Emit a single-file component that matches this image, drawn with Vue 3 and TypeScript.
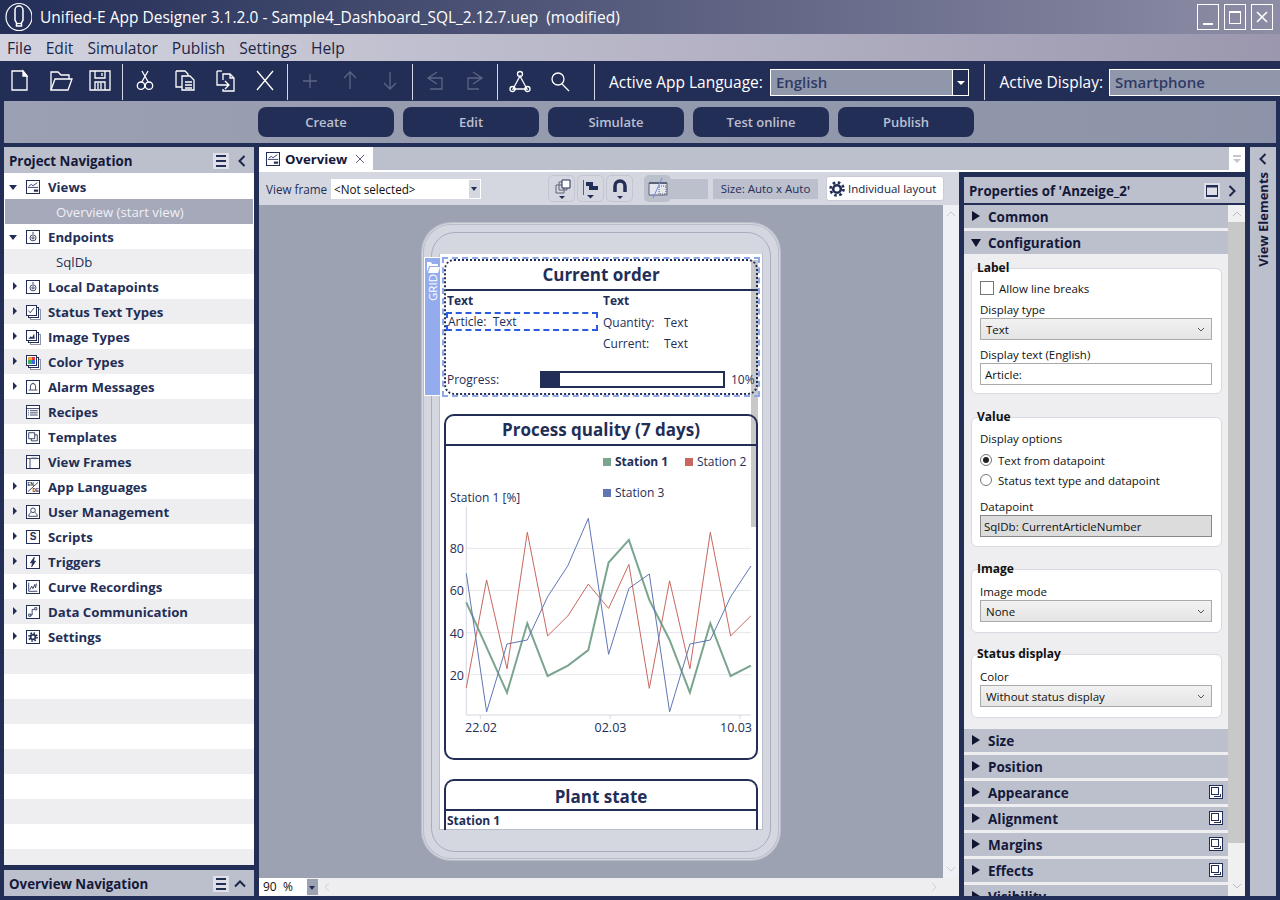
<script setup lang="ts">
const menus = ["File", "Edit", "Simulator", "Publish", "Settings", "Help"]
const actions = ["Create", "Edit", "Simulate", "Test online", "Publish"]

// toolbar icons, drawn on a 28x28 box
const toolIcons: Record<string, string> = {
  new: '<path d="M6 3h11l4 5v14H6z"/><path d="M17 3v5h4z" fill="currentColor"/>',
  open: '<path d="M5 22V4h7l3 3h8v4"/><path d="M5 22l4-11h17l-4 11z"/>',
  save: '<path d="M4 3h20v19H4z"/><path d="M9 3v7h10V3M9 22v-8h10v8M12 15v6M15 15v6M16 5v3"/>',
  cut: '<path d="M10.500 14.500L17 3M17.500 14.500L11 3"/><circle cx="10" cy="17.700" r="3.700"/><circle cx="18" cy="17.700" r="3.700"/>',
  copy: '<path d="M5 3h9l3 3v2M5 3v16h6"/><path d="M11 8h8l4 4v10H11z"/><path d="M14 14h7M14 17h7M14 20h7" />',
  paste: '<path d="M12 12V6h7l4 4v13H12v-2"/><path d="M19 6v4h4"/><path d="M6 3v14h12M14 13l4 4-4 4"/><path d="M6 3h5"/>',
  close: '<path d="M6 3l16 19M22 3L6 22"/>',
  add: '<path d="M14 6v14M7 13h14"/>',
  up: '<path d="M14 4v17M8 10l6-6 6 6"/>',
  down: '<path d="M14 4v17M8 15l6 6 6-6"/>',
  undo: '<path d="M16 4l-9 6 9 6M7 10h14v11H9"/>',
  redo: '<path d="M12 4l9 6-9 6M21 10H7v11h11"/>',
  network: '<path d="M14 8L7 21h14z"/><circle cx="14" cy="6" r="2.500"/><circle cx="6.500" cy="21" r="2.500"/><circle cx="21.500" cy="21" r="2.500"/>',
  search: '<circle cx="12" cy="11" r="6"/><path d="M16 16l7 7"/>',
}

const toolGroups = [
  [{ name: "new" }, { name: "open" }, { name: "save" }],
  [{ name: "cut" }, { name: "copy" }, { name: "paste" }, { name: "close" }],
  [{ name: "add", off: true }, { name: "up", off: true }, { name: "down", off: true }],
  [{ name: "undo", off: true }, { name: "redo", off: true }],
  [{ name: "network" }, { name: "search" }],
]

// project tree icons, drawn on a 14x14 box
const treeIcons: Record<string, string> = {
  views: '<path d="M2 6l3-2 2 1.500L12 2M1 7.500h12"/><path d="M8 10h5v2.500H8z" fill="currentColor" stroke="none"/>',
  point: '<path d="M7 1v2.500"/><circle cx="7" cy="8" r="3.500"/><circle cx="7" cy="8" r="1.300"/>',
  status: '<path d="M2 7l3 3.500L11 3" stroke-width="1.300"/>',
  image: '<path d="M2 12l4-4 2 2 3-6 1 8z" fill="currentColor" stroke="none"/>',
  alarm: '<path d="M4 10V6a3 3 0 0 1 6 0v4M2 10.500h10M7 2v1"/>',
  recipes: '<path d="M0 3h14M3.500 5.500h9M3.500 8h9M3.500 10.500h9M1.200 5.500h1M1.200 8h1M1.200 10.500h1"/>',
  templates: '<path d="M2 2h7v7H2zM9 4.500h3v7H5V9"/>',
  frames: '<path d="M0 3h14M3.500 3v11"/><path d="M5 1.500h7" stroke="#9a9fb3"/>',
  lang: '<path d="M1 12.500L13 1.500"/><text x="0.500" y="6" font-size="5.500" font-weight="700" fill="currentColor" stroke="none" font-family="Liberation Sans">EN</text><text x="6.500" y="13" font-size="5.500" font-weight="700" fill="currentColor" stroke="none" font-family="Liberation Sans">DE</text>',
  user: '<circle cx="7" cy="5" r="2.700"/><path d="M2 12c0-3 2-4 3-4.500M12 12c0-3-2-4-3-4.500M2 12h10"/>',
  trigger: '<path d="M8.500 1.500L4 8h2.500L5.500 12.500 10 6H7.500z" fill="currentColor"/>',
  curves: '<path d="M2 2v10h10M3.500 10l2-4 1.500 3 2-5 1 4 1-5"/>',
  comm: '<path d="M4 10.500h2V4h2.500M9 2h2.500v2.500H9zM2 9.500h2.500V12H2z"/>',
  settings: '<circle cx="7" cy="7" r="2.800" stroke-width="2"/><circle cx="7" cy="7" r="4.700" stroke-dasharray="1.800 1.900" stroke-width="1.800"/>',
}

const treeRows = [
  { label: "Views", icon: "views", arrow: "open" },
  { label: "Overview (start view)", child: true, selected: true },
  { label: "Endpoints", icon: "point", arrow: "open" },
  { label: "SqlDb", child: true },
  { label: "Local Datapoints", icon: "point", arrow: "closed" },
  { label: "Status Text Types", icon: "status", arrow: "closed", stacked: true },
  { label: "Image Types", icon: "image", arrow: "closed", stacked: true },
  { label: "Color Types", icon: "color", arrow: "closed", stacked: true },
  { label: "Alarm Messages", icon: "alarm", arrow: "closed" },
  { label: "Recipes", icon: "recipes" },
  { label: "Templates", icon: "templates" },
  { label: "View Frames", icon: "frames" },
  { label: "App Languages", icon: "lang", arrow: "closed" },
  { label: "User Management", icon: "user", arrow: "closed" },
  { label: "Scripts", icon: "scripts", arrow: "closed" },
  { label: "Triggers", icon: "trigger", arrow: "closed" },
  { label: "Curve Recordings", icon: "curves", arrow: "closed" },
  { label: "Data Communication", icon: "comm", arrow: "closed" },
  { label: "Settings", icon: "settings", arrow: "closed" },
  {}, {}, {}, {}, {}, {}, {}, {}, {},
]

const lowerSections = [
  { label: "Size" },
  { label: "Position" },
  { label: "Appearance", copy: true },
  { label: "Alignment", copy: true },
  { label: "Margins", copy: true },
  { label: "Effects", copy: true },
  { label: "Visibility" },
]

const progress = 10

// quality chart
const series = [
  {
    color: "#7aa58f",
    width: 2,
    values: [54.4, 33, 11.5, 44.4, 19.4, 24.3, 31.7, 73.3, 84, 55.5, 36.5, 11.5, 44.4, 19.4, 24.3],
  },
  {
    color: "#c8675f",
    width: 1,
    values: [13.8, 65, 22.8, 87.6, 38.4, 47.9, 63, 51.5, 72.4, 13.5, 64.6, 22.8, 87.6, 38.4, 47.9],
  },
  {
    color: "#6076b4",
    width: 1,
    values: [68.1, 2.4, 34.6, 36.5, 57, 71.8, 94.2, 29.7, 61, 67.8, 2.4, 34.6, 36.5, 57, 71.6],
  },
]

function yOf(v: number) {
  return 228.7 - (v - 20) * 2.106
}

function pointsOf(values: number[]) {
  return values.map((v, i) => `${(20.3 + i * 20.33).toFixed(1)},${yOf(v).toFixed(1)}`).join(" ")
}

const yTicks = [20, 40, 60, 80]
const xTicks = [
  { x: 34.3, labelX: 35, label: "22.02" },
  { x: 164, labelX: 164.500, label: "02.03" },
  { x: 294, labelX: 290, label: "10.03" },
]
</script>

<template>
  <div class="app">
    <header class="titlebar">
      <svg class="logo" width="30" height="30" viewBox="0 0 30 30" fill="none" stroke="#fff" stroke-width="1.200">
        <ellipse cx="17" cy="15" rx="13" ry="13.500" />
        <path d="M13 8a4 4 0 0 1 8 0v10l-1.500 3v3h-5v-3L13 18z" stroke-width="1.500" />
        <path d="M15 21.500h4" />
      </svg>
      <span class="title">Unified-E App Designer 3.1.2.0 - Sample4_Dashboard_SQL_2.12.7.uep&nbsp; (modified)</span>
      <div class="winbtns">
        <button class="winbtn"><span class="win-min"></span></button>
        <button class="winbtn"><span class="win-max"></span></button>
        <button class="winbtn">
          <svg width="12" height="12" viewBox="0 0 12 12" stroke="#fff" stroke-width="1.600"><path d="M1 1l10 10M11 1L1 11" /></svg>
        </button>
      </div>
    </header>

    <nav class="menubar">
      <span v-for="m in menus" :key="m">{{ m }}</span>
    </nav>

    <div class="toolbar">
      <div v-for="(group, g) in toolGroups" :key="g" class="toolgroup">
        <span v-for="tool in group" :key="tool.name" class="tool" :class="{ off: tool.off }">
          <svg width="28" height="28" viewBox="0 0 28 28" fill="none" stroke="currentColor" stroke-width="1.300" v-html="toolIcons[tool.name]"></svg>
        </span>
      </div>
      <label class="toollabel first">Active App Language:</label>
      <div class="toolcombo lang">
        <span>English</span>
        <i class="combo-arrow"></i>
      </div>
      <label class="toollabel second">Active Display:</label>
      <div class="toolcombo display"><span>Smartphone</span></div>
    </div>

    <div class="actionbar">
      <button v-for="a in actions" :key="a" class="action">{{ a }}</button>
    </div>

    <main class="workspace">
      <aside class="leftcol">
        <section class="nav">
          <div class="panelhead">
            <b>Project Navigation</b>
            <span class="burger"><i></i><i></i><i></i></span>
            <svg width="10" height="14" viewBox="0 0 10 14" fill="none" stroke="#1d2547" stroke-width="2"><path d="M7.500 2L2.500 7l5 5" /></svg>
          </div>
          <div class="tree">
            <div
              v-for="(row, i) in treeRows"
              :key="i"
              class="treerow"
              :class="{ selected: row.selected, child: row.child }"
            >
              <i v-if="row.arrow" :class="row.arrow === 'open' ? 'arrow-open' : 'arrow-closed'"></i>
              <span v-if="row.icon" class="treeicon" :class="{ stacked: row.stacked }">
                <span v-if="row.icon === 'scripts'" class="letter">S</span>
                <span v-else-if="row.icon === 'color'" class="swatch"><i></i><i></i><i></i><i></i></span>
                <svg v-else viewBox="0 0 14 14" fill="none" stroke="currentColor" stroke-width="1" v-html="treeIcons[row.icon]"></svg>
              </span>
              <span class="treelabel">{{ row.label }}</span>
            </div>
          </div>
        </section>
        <div class="panelhead overview-nav">
          <b>Overview Navigation</b>
          <span class="burger near"><i></i><i></i><i></i></span>
          <svg width="14" height="10" viewBox="0 0 14 10" fill="none" stroke="#1d2547" stroke-width="2"><path d="M2 7.500L7 2.500l5 5" /></svg>
        </div>
      </aside>

      <div class="centercol">
        <div class="tabstrip">
          <div class="tab">
            <span class="treeicon"><svg viewBox="0 0 14 14" fill="none" stroke="currentColor" v-html="treeIcons.views"></svg></span>
            <b>Overview</b>
            <svg class="tabclose" width="10" height="10" viewBox="0 0 10 10" stroke="#5b6079"><path d="M1 1l8 8M9 1L1 9" /></svg>
          </div>
          <div class="tabspace"></div>
          <div class="tabmenu"><i></i></div>
        </div>

        <div class="editorwrap">
          <div class="editor">
            <div class="viewbar">
              <span class="vf-label">View frame</span>
              <div class="vf-select"><span>&lt;Not selected&gt;</span><i class="vf-arrow"></i></div>
              <div class="iconbtns">
                <span class="iconbtn">
                  <svg width="24" height="24" viewBox="0 0 24 24" fill="none" stroke="#5c6378"><path d="M6 8h8v8H6zM9 5h8v8H9z" /><path d="M12 3h8v8h-8z" fill="#fff" stroke="#232e57" /><path d="M9 19h6l-3 3z" fill="#232e57" stroke="none" /></svg>
                </span>
                <span class="iconbtn">
                  <svg width="24" height="24" viewBox="0 0 24 24" fill="#232e57"><path d="M4 3h1v15H4z" fill="#5c6378" /><path d="M7 5h7v4H7zM10 9h9v4h-9z" /><path d="M8 18h7l-3.500 3.500z" /></svg>
                </span>
                <span class="iconbtn">
                  <svg width="24" height="24" viewBox="0 0 24 24" fill="none" stroke="#232e57" stroke-width="3.500"><path d="M7 15V9a5 5 0 0 1 10 0v6" /><path d="M9 19h6l-3 3z" fill="#232e57" stroke="none" /></svg>
                </span>
              </div>
              <div class="gridtoggle">
                <span class="gridbtn">
                  <svg width="22" height="22" viewBox="0 0 22 22" fill="none"><path d="M2 6h18v12H2z" fill="#e6e7ee" stroke="#5c6378" /><path d="M2 6h18" stroke="#5c6378" stroke-width="2" /><path d="M12 9h7v8h-7z" fill="none" stroke="#5c6378" stroke-dasharray="1 1" /><path d="M15 1L6 21" stroke="#6f8fe0" /></svg>
                </span>
              </div>
              <span class="sizebox">Size: Auto x Auto</span>
              <span class="layoutbtn">
                <svg width="16" height="16" viewBox="0 0 16 16" fill="none" stroke="#232e57"><circle cx="8" cy="8" r="3.800" stroke-width="2.600" /><circle cx="8" cy="8" r="6.500" stroke-width="2.600" stroke-dasharray="2.600 2.500" /></svg>
                Individual layout
              </span>
            </div>

            <div class="canvasrow">
              <div class="canvas">
                <div class="phone">
                  <div class="phone-inner">
                    <div class="screen">
                      <div class="screen-scroll"></div>

                      <div class="selected-card">
                        <div class="grid-tag">
                          <svg width="14" height="12" viewBox="0 0 14 12" fill="#fff"><path d="M1 1h4l1 2h6v2H3l-2 6zM4 6h10l-2 6H2z" /></svg>
                          <span>GRID</span>
                        </div>
                        <article class="card first">
                          <h2>Current order</h2>
                          <div class="order">
                            <div class="order-col">
                              <b class="bold-text">Text</b>
                              <div class="article">Article:&nbsp; Text</div>
                            </div>
                            <div class="order-col">
                              <b class="bold-text">Text</b>
                              <div class="kv"><span>Quantity:</span><span>Text</span></div>
                              <div class="kv"><span>Current:</span><span>Text</span></div>
                            </div>
                          </div>
                          <div class="progress">
                            <span class="progress-label">Progress:</span>
                            <div class="bar"><div class="bar-fill" :style="{ width: progress + '%' }"></div></div>
                            <span class="progress-val">{{ progress }}%</span>
                          </div>
                        </article>
                      </div>

                      <article class="card chart-card">
                        <h2>Process quality (7 days)</h2>
                        <svg class="chart" width="310" height="312" viewBox="0 0 310 312">
                          <g class="legend">
                            <rect x="157" y="12" width="8" height="8" fill="#7aa58f" />
                            <text x="169" y="20" font-weight="700">Station 1</text>
                            <rect x="239" y="12" width="8" height="8" fill="#c8675f" />
                            <text x="251" y="20">Station 2</text>
                            <rect x="157" y="43" width="8" height="8" fill="#6076b4" />
                            <text x="169" y="51">Station 3</text>
                            <text x="4" y="56">Station 1 [%]</text>
                          </g>
                          <line v-for="t in yTicks" :key="t" x1="20" x2="305" :y1="yOf(t)" :y2="yOf(t)" stroke="#e6e6ee" />
                          <path d="M20.300 60.700V269H305" fill="none" stroke="#d5d6e0" />
                          <line v-for="t in xTicks" :key="t.x" :x1="t.x" :x2="t.x" y1="269" y2="273" stroke="#d5d6e0" />
                          <text v-for="t in yTicks" :key="t" class="tick" x="18" :y="yOf(t) + 5" text-anchor="end">{{ t }}</text>
                          <text v-for="t in xTicks" :key="t.label" class="tick" :x="t.labelX" y="286" text-anchor="middle">{{ t.label }}</text>
                          <polyline
                            v-for="s in series"
                            :key="s.color"
                            :points="pointsOf(s.values)"
                            fill="none"
                            :stroke="s.color"
                            :stroke-width="s.width"
                          />
                        </svg>
                      </article>

                      <article class="card plant">
                        <h2>Plant state</h2>
                        <b class="bold-text">Station 1</b>
                      </article>
                    </div>
                  </div>
                </div>
              </div>
              <div class="vscroll">
                <svg width="10" height="6" viewBox="0 0 10 6" fill="none" stroke="#c9cbd2"><path d="M1 5l4-4 4 4" /></svg>
                <svg width="10" height="6" viewBox="0 0 10 6" fill="none" stroke="#c9cbd2"><path d="M1 1l4 4 4-4" /></svg>
              </div>
            </div>

            <div class="zoombar">
              <span class="zoomval">90&nbsp;&nbsp;%</span>
              <i class="zoomdrop"></i>
              <svg width="6" height="10" viewBox="0 0 6 10" fill="none" stroke="#cfd1d8"><path d="M5 1L1 5l4 4" /></svg>
              <span class="grow"></span>
              <svg width="6" height="10" viewBox="0 0 6 10" fill="none" stroke="#cfd1d8"><path d="M1 1l4 4-4 4" /></svg>
            </div>
          </div>

          <aside class="props">
            <div class="panelhead props-head">
              <b>Properties of 'Anzeige_2'</b>
              <svg class="winicon" width="16" height="16" viewBox="0 0 16 16" fill="none">
                <path d="M0 0h16v16H0z" fill="#dfe0e7" />
                <path d="M2.500 2.500h11v11h-11z" stroke="#232e57" />
                <path d="M2 2h12v2.500H2zM2 12h12v2H2z" fill="#232e57" />
              </svg>
              <svg width="10" height="14" viewBox="0 0 10 14" fill="none" stroke="#1d2547" stroke-width="2"><path d="M2.500 2l5 5-5 5" /></svg>
            </div>
            <div class="props-body">
              <div class="props-list">
                <div class="section"><i class="tri-right"></i>Common</div>
                <div class="section"><i class="tri-down"></i>Configuration</div>

                <div class="group label-group">
                  <b class="legend">Label</b>
                  <label class="check"><i class="checkbox"></i>Allow line breaks</label>
                  <div class="field">Display type</div>
                  <div class="select">Text<svg width="8" height="5" viewBox="0 0 8 5" fill="none" stroke="#555"><path d="M1 1l3 3 3-3" /></svg></div>
                  <div class="field">Display text (English)</div>
                  <div class="input">Article:</div>
                </div>

                <div class="group value-group">
                  <b class="legend">Value</b>
                  <div class="field plain">Display options</div>
                  <label class="radio"><i class="dot on"></i>Text from datapoint</label>
                  <label class="radio"><i class="dot"></i>Status text type and datapoint</label>
                  <div class="field dp">Datapoint</div>
                  <div class="input readonly">SqlDb: CurrentArticleNumber</div>
                </div>

                <div class="group image-group">
                  <b class="legend">Image</b>
                  <div class="field plain">Image mode</div>
                  <div class="select">None<svg width="8" height="5" viewBox="0 0 8 5" fill="none" stroke="#555"><path d="M1 1l3 3 3-3" /></svg></div>
                </div>

                <div class="group status-group">
                  <b class="legend">Status display</b>
                  <div class="field plain">Color</div>
                  <div class="select">Without status display<svg width="8" height="5" viewBox="0 0 8 5" fill="none" stroke="#555"><path d="M1 1l3 3 3-3" /></svg></div>
                </div>

                <div v-for="s in lowerSections" :key="s.label" class="section lower">
                  <i class="tri-right"></i>{{ s.label }}
                  <span v-if="s.copy" class="copyicon"><i></i></span>
                </div>
              </div>
              <div class="props-scroll">
                <svg width="10" height="6" viewBox="0 0 10 6" fill="none" stroke="#bbbdc4"><path d="M1 5l4-4 4 4" /></svg>
                <div class="thumb"></div>
                <svg class="scroll-end" width="10" height="6" viewBox="0 0 10 6" fill="none" stroke="#bbbdc4"><path d="M1 1l4 4 4-4" /></svg>
              </div>
            </div>
          </aside>
        </div>
      </div>

      <aside class="elements">
        <svg width="10" height="14" viewBox="0 0 10 14" fill="none" stroke="#1d2547" stroke-width="2"><path d="M7.500 2L2.500 7l5 5" /></svg>
        <b>View Elements</b>
      </aside>
    </main>
  </div>
</template>

<style>
html,
body {
  margin: 0;
  background: #232e57;
}
</style>

<style scoped>
.app {
  width: 1280px;
  height: 900px;
  overflow: hidden;
  display: flex;
  flex-direction: column;
  background: #232e57;
  font-family: "Open Sans", "Noto Sans", sans-serif;
  font-size: 12px;
  color: #232e57;
}

button {
  font-family: inherit;
  padding: 0;
  border: none;
}

/* title + menu */
.titlebar {
  height: 34px;
  flex: none;
  display: flex;
  align-items: center;
  padding-left: 2px;
  background: linear-gradient(90deg, #232e57 0%, #8d8da5 100%);
  color: #fff;
}

.logo {
  flex: none;
}

.title {
  margin-left: 8px;
  font-size: 15.500px;
  white-space: nowrap;
}

.winbtns {
  margin-left: auto;
  margin-right: 7px;
  display: flex;
  gap: 5px;
}

.winbtn {
  width: 22px;
  height: 26px;
  border: 1px solid #fff;
  background: transparent;
  display: flex;
  align-items: center;
  justify-content: center;
  position: relative;
}

.win-min {
  width: 10px;
  height: 2px;
  background: #fff;
  margin-top: 14px;
}

.win-max {
  width: 10px;
  height: 10px;
  border: 1px solid #fff;
  border-top-width: 2px;
}

.menubar {
  height: 27px;
  flex: none;
  display: flex;
  align-items: center;
  gap: 14px;
  padding-left: 7px;
  background: linear-gradient(90deg, #d2d3df 0%, #9b97ae 100%);
  font-size: 15.600px;
  color: #1d2547;
  font-weight: 500;
}

/* toolbar */
.toolbar {
  height: 40px;
  flex: none;
  box-sizing: border-box;
  padding-top: 2px;
  display: flex;
  align-items: center;
  color: #fff;
}

.toolgroup {
  display: flex;
  height: 36px;
  align-items: center;
  border-right: 1px solid #d5d7e2;
  padding-right: 2px;
  margin-right: 2px;
}

.toolgroup:nth-child(5) {
  padding-right: 14px;
  margin-right: 14px;
}

.tool {
  width: 40px;
  display: flex;
  justify-content: center;
}

.tool.off {
  color: #5d6585;
}

.toollabel {
  font-size: 15.500px;
  white-space: nowrap;
}

.toolcombo {
  height: 27px;
  box-sizing: border-box;
  border: 1px solid #fff;
  background: #9197aa;
  color: #2f3a66;
  font-size: 15px;
  font-weight: 600;
  display: flex;
  align-items: center;
  padding-left: 5px;
}

.toolcombo.lang {
  width: 200px;
  margin-left: 7px;
  position: relative;
}

.toolcombo.display {
  margin-left: 6px;
  width: 171px;
  flex: none;
  border-right: none;
}

.combo-arrow {
  position: absolute;
  right: 0;
  top: 0;
  bottom: 0;
  width: 15px;
  background: #232e57;
  border-left: 1px solid #fff;
}

.combo-arrow::after {
  content: "";
  position: absolute;
  left: 4px;
  top: 11px;
  border: 4px solid transparent;
  border-top-color: #fff;
}

.toollabel.second {
  margin-left: 15px;
  padding-left: 14px;
  border-left: 1px solid #d5d7e2;
  height: 36px;
  line-height: 36px;
}

.actionbar {
  height: 42px;
  flex: none;
  margin: 0 4px;
  display: flex;
  align-items: center;
  gap: 9px;
  padding-left: 254px;
  box-sizing: border-box;
  background: linear-gradient(90deg, #9ba1b2, #8d93a8);
}

.action {
  width: 136px;
  height: 30px;
  border-radius: 8px;
  background: #232e57;
  color: #bcc0d0;
  font-size: 13px;
  font-weight: 600;
}

/* workspace */
.workspace {
  flex: 1;
  min-height: 0;
  display: flex;
  padding: 4px;
}

.leftcol {
  width: 250px;
  flex: none;
  display: flex;
  flex-direction: column;
  gap: 5px;
}

.nav {
  flex: 1;
  min-height: 0;
  display: flex;
  flex-direction: column;
}

.panelhead {
  height: 26px;
  flex: none;
  display: flex;
  align-items: center;
  padding: 2px 7px 0 5px;
  box-sizing: border-box;
  background: #bcbfcc;
  font-size: 13.300px;
  color: #14193a;
}

.panelhead b {
  flex: 1;
  white-space: nowrap;
}

.burger {
  width: 16px;
  height: 16px;
  margin-right: 8px;
  background: #dfe0e7;
  display: flex;
  flex-direction: column;
  justify-content: center;
  gap: 3px;
  padding: 0 3px;
  box-sizing: border-box;
}

.burger.near {
  margin-right: 4px;
}

.burger i {
  height: 2px;
  background: #232e57;
}

.tree {
  flex: 1;
  min-height: 0;
  overflow: hidden;
  padding-top: 1px;
  background: #fff;
}

.treerow {
  height: 25px;
  box-sizing: border-box;
  position: relative;
  display: flex;
  align-items: center;
  padding-left: 22px;
  font-size: 13.200px;
  font-weight: 700;
  color: #232e57;
}

.treerow:nth-child(even) {
  background: #eeeef0;
}

.treerow.child {
  padding-left: 52px;
  font-weight: 400;
  background: #eeeef0;
}

.treerow.selected {
  background: #a6a9b9;
  color: #eef0f6;
  margin-left: 1px;
  margin-right: 1px;
  padding-left: 51px;
}

.arrow-open {
  position: absolute;
  left: 5px;
  top: 11px;
  border: 4px solid transparent;
  border-top: 5px solid #232e57;
  border-bottom: none;
}

.arrow-closed {
  position: absolute;
  left: 9px;
  top: 8px;
  border: 4px solid transparent;
  border-left: 4px solid #232e57;
  border-right: none;
}

.treeicon {
  width: 14px;
  height: 14px;
  box-sizing: border-box;
  flex: none;
  border: 1px solid #232e57;
  background: #fff;
  color: #232e57;
  position: relative;
  display: block;
  margin-right: 8px;
}

.treeicon svg {
  display: block;
  width: 12px;
  height: 12px;
}

.treeicon.stacked {
  width: 11px;
  height: 11px;
  margin: -3px 11px 0 0;
  box-shadow: 2px 2px 0 -1px #fff, 2px 2px 0 0 #232e57, 4px 4px 0 -1px #fff, 4px 4px 0 0 #8e93a8;
}

.treeicon.stacked svg {
  width: 9px;
  height: 9px;
}

.letter {
  display: block;
  text-align: center;
  font-size: 10px;
  line-height: 12px;
  font-family: "Liberation Sans", sans-serif;
  font-weight: 700;
}

.swatch {
  display: grid;
  grid-template-columns: 1fr 1fr;
  grid-template-rows: 1fr 1fr;
  position: absolute;
  inset: 1px;
}

.swatch i:nth-child(1) {
  background: #f2a23b;
}
.swatch i:nth-child(2) {
  background: #e23a3a;
}
.swatch i:nth-child(3) {
  background: #3aae5c;
}
.swatch i:nth-child(4) {
  background: #3b6be0;
}

.treelabel {
  white-space: nowrap;
}

/* center */
.centercol {
  width: 986px;
  margin-left: 5px;
  flex: none;
  display: flex;
  flex-direction: column;
  min-height: 0;
}

.tabstrip {
  height: 25px;
  flex: none;
  display: flex;
  background: #fff;
  padding-bottom: 2px;
  box-sizing: border-box;
}

.tab {
  width: 114px;
  display: flex;
  align-items: center;
  padding-left: 7px;
  box-sizing: border-box;
  background: #fff;
  color: #14193a;
  font-size: 13.200px;
}

.tab .treeicon {
  margin-right: 5px;
}

.tabclose {
  margin-left: 8px;
}

.tabspace {
  flex: 1;
  background: #bcbfcc;
}

.tabmenu {
  width: 16px;
  position: relative;
}

.tabmenu i {
  position: absolute;
  left: 4px;
  top: 8px;
  width: 8px;
  border-top: 2px solid #c5c7d0;
}

.tabmenu i::after {
  content: "";
  position: absolute;
  left: 0;
  top: 2px;
  border: 4px solid transparent;
  border-top-color: #c5c7d0;
}

.editorwrap {
  flex: 1;
  min-height: 0;
  display: flex;
}

.editor {
  width: 700px;
  flex: none;
  display: flex;
  flex-direction: column;
  min-height: 0;
}

.viewbar {
  height: 33px;
  flex: none;
  display: flex;
  align-items: center;
  padding-left: 7px;
  background: #d5d7e0;
  color: #232e57;
  font-size: 11.700px;
}

.vf-label {
  width: 65px;
  flex: none;
}

.vf-select {
  width: 150px;
  height: 20px;
  flex: none;
  background: #fff;
  display: flex;
  align-items: center;
  padding-left: 3px;
  box-sizing: border-box;
  position: relative;
  color: #111;
}

.vf-arrow {
  position: absolute;
  right: 1px;
  top: 1px;
  bottom: 1px;
  width: 11px;
  background: #d5d7e0;
}

.vf-arrow::after {
  content: "";
  position: absolute;
  left: 2px;
  top: 7px;
  border: 3.500px solid transparent;
  border-top: 4px solid #232e57;
}

.iconbtns {
  display: flex;
  gap: 2px;
  margin-left: 67px;
}

.iconbtn {
  width: 27px;
  height: 27px;
  box-sizing: border-box;
  border: 1px solid #c3c5d0;
  border-radius: 5px;
  display: flex;
  align-items: center;
  justify-content: center;
}

.gridtoggle {
  margin-left: 11px;
  width: 64px;
  height: 20px;
  background: #bcbfcc;
  position: relative;
}

.gridbtn {
  position: absolute;
  left: 0;
  top: -4px;
  width: 27px;
  height: 27px;
  border-radius: 5px;
  background: #bcbfcc;
  display: flex;
  align-items: center;
  justify-content: center;
}

.sizebox {
  margin-left: 5px;
  width: 105px;
  height: 20px;
  background: #bcbfcc;
  display: flex;
  align-items: center;
  justify-content: center;
  font-size: 11.500px;
  white-space: nowrap;
}

.layoutbtn {
  margin-left: 8px;
  width: 118px;
  height: 25px;
  box-sizing: border-box;
  background: #fff;
  border: 1px solid #c9cbd6;
  border-radius: 3px;
  display: flex;
  align-items: center;
  gap: 3px;
  padding-left: 2px;
  color: #14193a;
  font-size: 11.500px;
  white-space: nowrap;
}

.canvasrow {
  flex: 1;
  min-height: 0;
  display: flex;
}

.canvas {
  width: 684px;
  flex: none;
  background: #9da2b2;
  padding: 17px 0 0 162px;
  box-sizing: border-box;
  overflow: hidden;
}

.phone {
  width: 360px;
  height: 639px;
  box-sizing: border-box;
  padding: 9px;
  border: 1px solid #b9bcc9;
  border-radius: 30px;
  background: #d5d7e0;
  box-shadow: inset 0 0 0 1px #d5d7e0, inset 0 0 0 2px #b9bcc9;
}

.phone-inner {
  height: 620px;
  box-sizing: border-box;
  padding: 20px 7px 0;
  border: 1px solid #a9adbd;
  border-radius: 24px;
}

.screen {
  width: 324px;
  height: 577px;
  box-sizing: border-box;
  padding: 5px 4px 0;
  background: #fff;
  border: 1px solid #b9bcc9;
  border-top-color: #d5d7e0;
  position: relative;
  display: flex;
  flex-direction: column;
  gap: 19px;
}

.screen-scroll {
  position: absolute;
  left: 311px;
  top: 6px;
  width: 7px;
  height: 267px;
  background: #c8c8c8;
}

.selected-card {
  position: relative;
  width: 314px;
  outline: 2px dashed #8fa8ea;
  outline-offset: 0;
}

.grid-tag {
  position: absolute;
  left: -20px;
  top: -2px;
  width: 17px;
  height: 139px;
  box-sizing: border-box;
  background: #94acee;
  border: 1px solid #fff;
  color: #fff;
  display: flex;
  flex-direction: column;
  align-items: center;
  padding-top: 3px;
}

.grid-tag svg {
  flex: none;
}

.grid-tag span {
  writing-mode: vertical-rl;
  transform: rotate(180deg);
  font-size: 11.500px;
  margin-top: 1px;
}

.card {
  position: relative;
  box-sizing: border-box;
  width: 314px;
  border: 2px solid #232e57;
  border-radius: 10px;
  flex: none;
}

.card.first {
  height: 136px;
  border-style: dotted;
}

.card h2 {
  margin: 0;
  height: 30px;
  box-sizing: border-box;
  border-bottom: 2px solid #232e57;
  text-align: center;
  font-size: 17px;
  line-height: 27px;
  font-weight: 700;
}

.bold-text {
  font-weight: 700;
}

.order {
  display: grid;
  grid-template-columns: 156px 1fr;
  padding-left: 1px;
}

.order-col {
  display: flex;
  flex-direction: column;
  font-size: 12px;
}

.order-col .bold-text {
  height: 20px;
  line-height: 20px;
}

.article {
  width: 152px;
  height: 19px;
  margin-top: 1px;
  margin-left: -1px;
  box-sizing: border-box;
  border: 2px dashed #2a5be0;
  line-height: 16px;
}

.kv {
  display: grid;
  grid-template-columns: 61px 1fr;
  height: 21px;
  line-height: 21px;
  margin-top: 1px;
}

.kv + .kv {
  margin-top: 0;
}

.progress {
  display: flex;
  align-items: center;
  margin-top: 17px;
  padding-left: 1px;
}

.progress-label {
  width: 93px;
}

.bar {
  width: 185px;
  height: 17px;
  box-sizing: border-box;
  border: 2px solid #232e57;
}

.bar-fill {
  height: 100%;
  background: #232e57;
}

.progress-val {
  margin-left: 6px;
}

.chart-card {
  height: 346px;
}

.chart {
  display: block;
}

.legend text,
.tick {
  font-family: "Open Sans", sans-serif;
  font-size: 12px;
  fill: #232e57;
}

.tick {
  font-size: 12.500px;
}

.plant {
  height: 51px;
  overflow: hidden;
  border-bottom: none;
  border-radius: 10px 10px 0 0;
}

.card.plant h2 {
  line-height: 31px;
}

.plant .bold-text {
  display: block;
  padding-left: 1px;
  line-height: 20px;
}

.vscroll {
  width: 16px;
  flex: none;
  background: #eef0f6;
  display: flex;
  flex-direction: column;
  justify-content: space-between;
  align-items: center;
  padding: 6px 0;
  box-sizing: border-box;
}

.zoombar {
  height: 18px;
  flex: none;
  background: #eeeef0;
  display: flex;
  align-items: center;
  font-size: 12px;
  color: #111;
  gap: 4px;
  padding-right: 22px;
}

.zoomval {
  width: 48px;
  padding-left: 4px;
  box-sizing: border-box;
  background: #fff;
  height: 18px;
  line-height: 18px;
  margin-right: -4px;
}

.zoomdrop {
  width: 11px;
  height: 16px;
  background: #9da2b2;
  position: relative;
  margin-right: 2px;
}

.zoomdrop::after {
  content: "";
  position: absolute;
  left: 2px;
  top: 7px;
  border: 3.500px solid transparent;
  border-top: 4px solid #232e57;
}

.grow {
  flex: 1;
}

/* properties */
.props {
  width: 281px;
  margin-left: 5px;
  padding-top: 5px;
  flex: none;
  display: flex;
  flex-direction: column;
  min-height: 0;
  background: #232e57;
}

.props-head {
  padding: 2px 8px 0 5px;
}

.winicon {
  flex: none;
  margin-right: 7px;
}

.props-body {
  flex: 1;
  min-height: 0;
  display: flex;
  margin-top: 2px;
  overflow: hidden;
}

.props-list {
  width: 264px;
  flex: none;
  background: #eeeef0;
  overflow: hidden;
}

.section {
  height: 23px;
  margin-bottom: 3px;
  background: #bcbfcc;
  display: flex;
  align-items: center;
  padding-left: 24px;
  position: relative;
  font-size: 13.500px;
  font-weight: 700;
  color: #14193a;
}

.tri-right {
  position: absolute;
  left: 8px;
  top: 6px;
  border: 5px solid transparent;
  border-left: 8px solid #10142e;
  border-right: none;
}

.tri-down {
  position: absolute;
  left: 7px;
  top: 8px;
  border: 5px solid transparent;
  border-top: 8px solid #10142e;
  border-bottom: none;
}

.copyicon {
  position: absolute;
  right: 5px;
  top: 4px;
  width: 14px;
  height: 14px;
  box-sizing: border-box;
  border: 1px solid #232e57;
  background: #fff;
}

.copyicon::before {
  content: "";
  position: absolute;
  left: 1px;
  top: 1px;
  width: 6px;
  height: 6px;
  border: 1px solid #232e57;
}

.copyicon i {
  position: absolute;
  left: 4px;
  top: 8px;
  width: 6px;
  height: 2px;
  border-right: 1px solid #232e57;
  border-bottom: 1px solid #232e57;
}

.group {
  position: relative;
  margin: 0 6px 0 7px;
  box-sizing: border-box;
  background: #fff;
  border: 1px solid #d8d9e3;
  border-radius: 6px;
  padding: 0 9px 0 8px;
  font-size: 11.500px;
  color: #111;
}

.legend {
  position: absolute;
  left: 5px;
  top: -9px;
  line-height: 15px;
  font-size: 12px;
  color: #111;
}

.label-group {
  height: 126px;
  margin-top: 14px;
  padding-top: 9px;
}

.value-group {
  height: 130px;
  margin-top: 23px;
  padding-top: 12px;
}

.image-group {
  height: 64px;
  margin-top: 22px;
  padding-top: 13px;
}

.status-group {
  height: 64px;
  margin-top: 21px;
  padding-top: 13px;
}

.status-group + .section {
  margin-top: 11px;
}

.check {
  display: flex;
  align-items: center;
  gap: 5px;
  height: 20px;
}

.checkbox {
  width: 14px;
  height: 14px;
  box-sizing: border-box;
  border: 1px solid #777;
  background: #fff;
}

.field {
  height: 17px;
  line-height: 17px;
  margin-top: 3px;
}

.field.plain {
  margin-top: 0;
}

.select,
.input {
  height: 22px;
  box-sizing: border-box;
  border: 1px solid #aaa;
  display: flex;
  align-items: center;
  padding-left: 5px;
  justify-content: space-between;
  padding-right: 6px;
  background: linear-gradient(#f2f2f2, #e4e4e4);
}

.input {
  background: #fff;
  padding-left: 4px;
}

.input.readonly {
  background: #dcdcdc;
  border-color: #888;
  padding-left: 3px;
}

.select + .field {
  margin-top: 6px;
}

.radio {
  display: flex;
  align-items: center;
  gap: 6px;
  height: 20px;
  margin-top: 3px;
}

.radio + .radio {
  margin-top: 0;
}

.dot {
  width: 12px;
  height: 12px;
  box-sizing: border-box;
  border: 1px solid #777;
  border-radius: 50%;
  background: #fff;
  position: relative;
}

.dot.on::after {
  content: "";
  position: absolute;
  inset: 2px;
  border-radius: 50%;
  background: #222;
}

.field.dp {
  margin-top: 8px;
}

.props-scroll {
  width: 17px;
  flex: none;
  background: #f0f0f0;
  display: flex;
  flex-direction: column;
  align-items: center;
  padding-top: 6px;
  box-sizing: border-box;
}

.thumb {
  width: 100%;
  height: 621px;
  margin-top: 5px;
  background: #c8c8c8;
}

.scroll-end {
  margin-top: 40px;
}

.elements {
  width: 26px;
  flex: none;
  margin-left: 5px;
  background: #bcbfcc;
  display: flex;
  flex-direction: column;
  align-items: center;
  padding-top: 5px;
  box-sizing: border-box;
  color: #14193a;
}

.elements b {
  writing-mode: vertical-rl;
  transform: rotate(180deg);
  font-size: 13px;
  margin-top: 6px;
  white-space: nowrap;
}
</style>
